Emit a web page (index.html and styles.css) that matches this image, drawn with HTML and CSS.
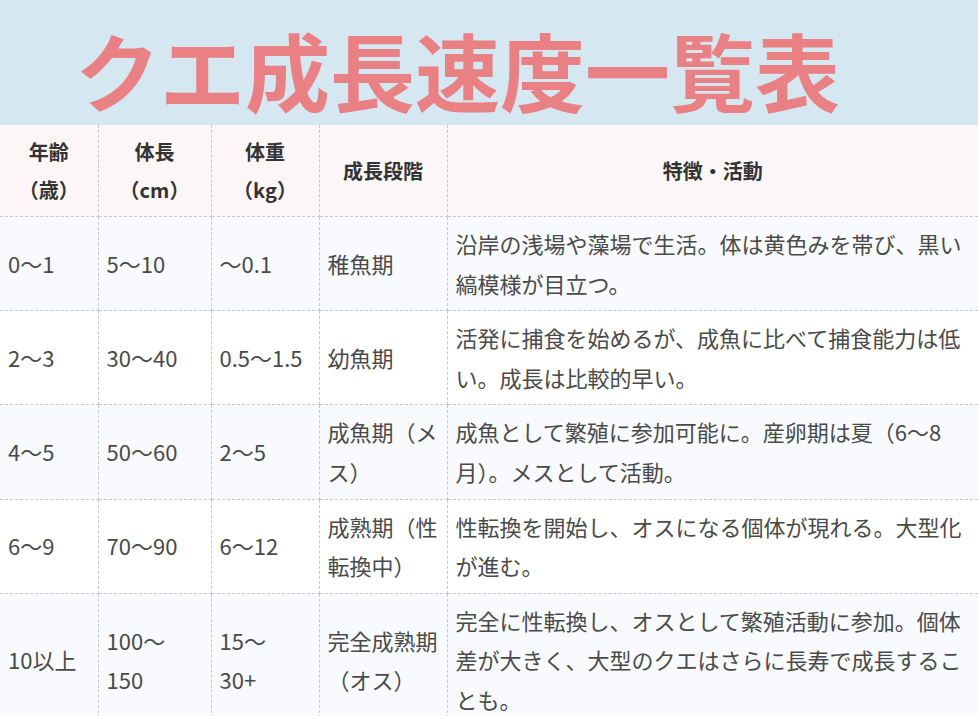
FILE: index.html
```html
<!DOCTYPE html>
<html lang="ja">
<head>
<meta charset="utf-8">
<title>クエ成長速度一覧表</title>
<link rel="stylesheet" href="styles.css">
</head>
<body>
<header class="banner">
  <h1 class="title">クエ成長速度一覧表</h1>
</header>
<table class="growth">
  <colgroup>
    <col class="c-age"><col class="c-len"><col class="c-wt"><col class="c-stage"><col class="c-desc">
  </colgroup>
  <thead>
    <tr>
      <th>年齢<br>（歳）</th>
      <th>体長<br>（cm）</th>
      <th>体重<br>（kg）</th>
      <th>成長段階</th>
      <th>特徴・活動</th>
    </tr>
  </thead>
  <tbody>
    <tr class="odd">
      <td>0～1</td>
      <td>5～10</td>
      <td>～0.1</td>
      <td>稚魚期</td>
      <td>沿岸の浅場や藻場で生活。体は黄色みを帯び、黒い縞模様が目立つ。</td>
    </tr>
    <tr>
      <td>2～3</td>
      <td>30～40</td>
      <td class="nowrap">0.5～1.5</td>
      <td>幼魚期</td>
      <td>活発に捕食を始めるが、成魚に比べて捕食能力は低い。成長は比較的早い。</td>
    </tr>
    <tr class="odd">
      <td>4～5</td>
      <td>50～60</td>
      <td>2～5</td>
      <td>成魚期（メス）</td>
      <td>成魚として繁殖に参加可能に。産卵期は夏（6～8月）。メスとして活動。</td>
    </tr>
    <tr>
      <td>6～9</td>
      <td>70～90</td>
      <td>6～12</td>
      <td>成熟期（性転換中）</td>
      <td>性転換を開始し、オスになる個体が現れる。大型化が進む。</td>
    </tr>
    <tr class="odd">
      <td>10以上</td>
      <td>100～<br>150</td>
      <td>15～<br>30+</td>
      <td>完全成熟期<br>（オス）</td>
      <td>完全に性転換し、オスとして繁殖活動に参加。個体差が大きく、大型のクエはさらに長寿で成長することも。</td>
    </tr>
  </tbody>
</table>
</body>
</html>
```
FILE: styles.css
```css
html, body {
  margin: 0;
  padding: 0;
  background: #ffffff;
}
body {
  font-family: "Noto Sans CJK JP", "Noto Sans", sans-serif;
  color: #4a4a4a;
  width: 978px;
  overflow: hidden;
}
.banner {
  background: #d5e8f2;
  height: 125px;
  display: flex;
  align-items: center;
  padding-left: 75px;
  box-sizing: border-box;
}
.title {
  margin: 0;
  font-size: 85px;
  font-weight: 700;
  line-height: 1;
  color: #e98083;
  letter-spacing: 0;
  white-space: nowrap;
  transform: translateY(6px);
}
.growth {
  width: 978px;
  table-layout: fixed;
  border-collapse: collapse;
  font-size: 22px;
  line-height: 1.8;
}
.c-age { width: 98px; }
.c-len { width: 113px; }
.c-wt { width: 108px; }
.c-stage { width: 128px; }
.growth th,
.growth td {
  padding: 7px 8px;
  vertical-align: middle;
  border-right: 1px dashed #c8c8c8;
  border-bottom: 1px dashed #c8c8c8;
  text-align: left;
}
.growth th:last-child,
.growth td:last-child {
  border-right: none;
}
.growth th {
  background: #fcf6f8;
  color: #333333;
  font-weight: 700;
  font-size: 20px;
  line-height: 38px;
  text-align: center;
  height: 77px;
}
.growth tbody tr { background: #ffffff; }
.growth tbody tr.odd { background: #f8fafd; }
.growth td { height: 79px; }
.nowrap { white-space: nowrap; }
```
